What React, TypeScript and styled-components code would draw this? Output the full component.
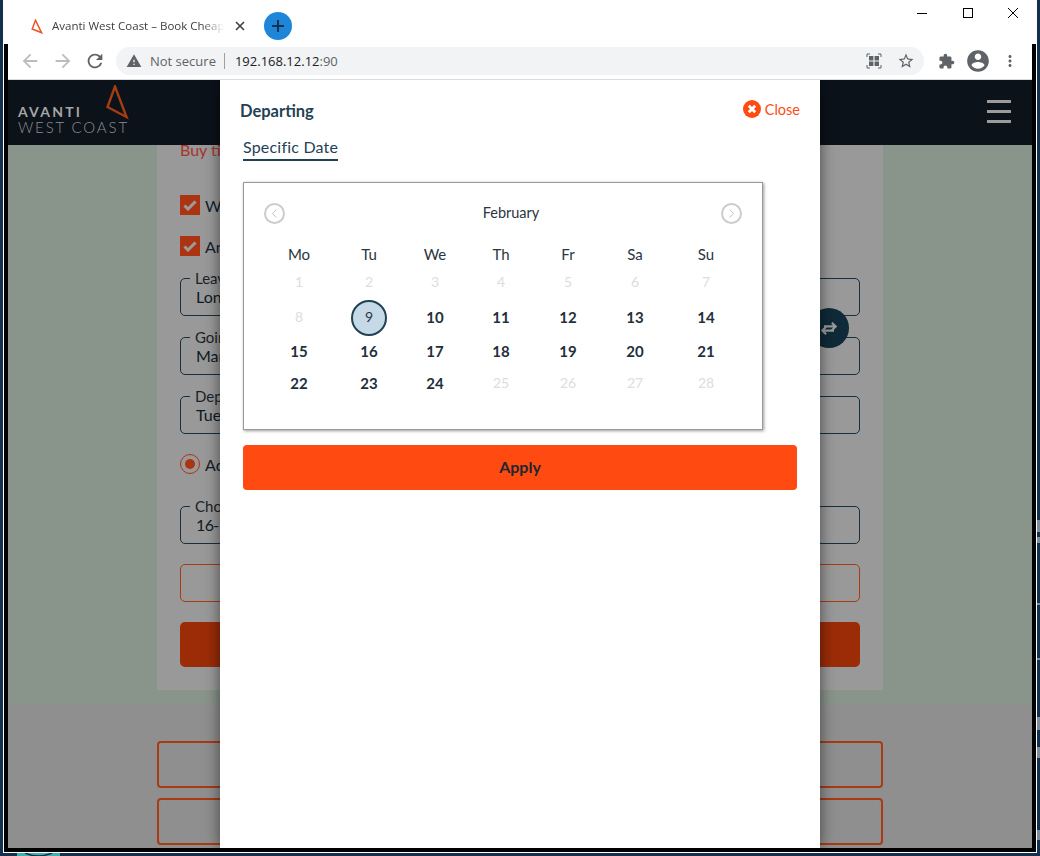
import React from 'react';
import styled, { createGlobalStyle } from 'styled-components';

const GlobalStyle = createGlobalStyle`
    html, body {
        margin: 0;
        padding: 0;
        background: #14304f;
    }
    * {
        box-sizing: border-box;
    }
`;

const weekdays = ['Mo', 'Tu', 'We', 'Th', 'Fr', 'Sa', 'Su'];
const days = Array.from({ length: 28 }, (_, i) => i + 1);

/* bits of desktop icon labels showing past the window edge */
const desktopMarks = [
    { top: 520, height: 12 },
    { top: 537, height: 6 },
    { top: 603, height: 2 },
    { top: 658, height: 2 },
    { top: 717, height: 13 },
    { top: 747, height: 11 },
    { top: 830, height: 10 },
];

const isOff = (day: number) => day < 9 || day > 24;

const Icon: React.FC<{ d: string; size?: number; color: string }> = ({ d, size = 24, color }) => (
    <svg width={size} height={size} viewBox="0 0 24 24" fill={color}>
        <path d={d} />
    </svg>
);

const ICONS = {
    back: 'M20 11H7.83l5.59-5.59L12 4l-8 8 8 8 1.41-1.41L7.83 13H20v-2z',
    forward: 'M12 4l-1.41 1.41L16.17 11H4v2h12.17l-5.58 5.59L12 20l8-8z',
    reload: 'M17.65 6.35C16.2 4.9 14.21 4 12 4c-4.42 0-7.99 3.58-7.99 8s3.57 8 7.99 8c3.73 0 6.84-2.55 7.73-6h-2.08c-.82 2.33-3.04 4-5.65 4-3.31 0-6-2.69-6-6s2.69-6 6-6c1.66 0 3.14.69 4.22 1.78L13 11h7V4l-2.35 2.35z',
    warning: 'M1 21h22L12 2 1 21zm12-3h-2v-2h2v2zm0-4h-2v-4h2v4z',
    star: 'M22 9.24l-7.19-.62L12 2 9.19 8.63 2 9.24l5.46 4.73L5.82 21 12 17.27 18.18 21l-1.63-7.03L22 9.24zM12 15.4l-3.76 2.27 1-4.28-3.32-2.88 4.38-.38L12 6.1l1.71 4.04 4.38.38-3.32 2.88 1 4.28L12 15.4z',
    puzzle: 'M20.5 11H19V7c0-1.1-.9-2-2-2h-4V3.5C13 2.12 11.88 1 10.5 1S8 2.12 8 3.5V5H4c-1.1 0-1.99.9-1.99 2v3.8H3.5c1.49 0 2.7 1.21 2.7 2.7s-1.21 2.7-2.7 2.7H2V20c0 1.1.9 2 2 2h3.8v-1.5c0-1.49 1.21-2.7 2.7-2.7 1.49 0 2.7 1.21 2.7 2.7V22H17c1.1 0 2-.9 2-2v-4h1.5c1.38 0 2.5-1.12 2.5-2.5S21.88 11 20.5 11z',
    account: 'M12 2C6.48 2 2 6.48 2 12s4.48 10 10 10 10-4.48 10-10S17.52 2 12 2zm0 3c1.66 0 3 1.34 3 3s-1.34 3-3 3-3-1.34-3-3 1.34-3 3-3zm0 14.2c-2.5 0-4.71-1.28-6-3.22.03-1.99 4-3.08 6-3.08 1.99 0 5.97 1.09 6 3.08-1.29 1.94-3.5 3.22-6 3.22z',
    dots: 'M12 8c1.1 0 2-.9 2-2s-.9-2-2-2-2 .9-2 2 .9 2 2 2zm0 2c-1.1 0-2 .9-2 2s.9 2 2 2 2-.9 2-2-.9-2-2-2zm0 6c-1.1 0-2 .9-2 2s.9 2 2 2 2-.9 2-2-.9-2-2-2z',
};

const CheckMark: React.FC = () => (
    <svg width="14" height="12" viewBox="0 0 14 12">
        <path d="M1.5 6.5 L5 10 L12.5 2.5" fill="none" stroke="#9c9c9c" strokeWidth="3" />
    </svg>
);

const MonthArrow: React.FC<{ dir: 'left' | 'right' }> = ({ dir }) => (
    <svg width="21" height="21" viewBox="0 0 21 21" fill="none">
        <circle cx="10.5" cy="10.5" r="9.5" stroke="#cccccc" strokeWidth="2" />
        <path d={dir === 'left' ? 'M12.3 6.5 L8.5 10.5 L12.3 14.5' : 'M8.7 6.5 L12.5 10.5 L8.7 14.5'} stroke="#c4c4c4" strokeWidth="1" />
    </svg>
);

export default function App(): React.ReactElement {
    return (
        <Desktop>
            <GlobalStyle />
            <DesktopIcon width="43" height="3" viewBox="0 0 43 3">
                <rect width="43" height="3" fill="#3fb0b4" />
                <path d="M8 0 Q21 6 35 0" fill="none" stroke="#14304f" strokeWidth="1.5" />
            </DesktopIcon>
            {desktopMarks.map((mark) => (
                <DesktopMark key={mark.top} $top={mark.top} $height={mark.height} />
            ))}
            <Window>
                <TitleBar>
                    <Tab>
                        <svg width="12" height="15" viewBox="0 0 12 15" fill="none">
                            <path d="M4.5 1.2 L1.2 10 L10.6 13.8 Z" stroke="#f0522a" strokeWidth="1.5" />
                        </svg>
                        <TabTitle>Avanti West Coast – Book Cheap Train Tickets</TabTitle>
                        <svg width="10" height="10" viewBox="0 0 10 10">
                            <path d="M1 1 L9 9 M9 1 L1 9" stroke="#3c4043" strokeWidth="1.6" />
                        </svg>
                    </Tab>
                    <NewTab>
                        <svg width="14" height="14" viewBox="0 0 14 14">
                            <path d="M7 1 V13 M1 7 H13" stroke="#14304f" strokeWidth="2" />
                        </svg>
                    </NewTab>
                    <WindowControls>
                        <svg width="12" height="12" viewBox="0 0 12 12">
                            <path d="M1 6.5 H11" stroke="#000" strokeWidth="1" />
                        </svg>
                        <svg width="12" height="12" viewBox="0 0 12 12" fill="none">
                            <rect x="1.5" y="1.5" width="9" height="9" stroke="#000" strokeWidth="1" />
                        </svg>
                        <svg width="12" height="12" viewBox="0 0 12 12">
                            <path d="M1 1 L11 11 M11 1 L1 11" stroke="#000" strokeWidth="1" />
                        </svg>
                    </WindowControls>
                </TitleBar>
                <Frame>
                    <Toolbar>
                        <NavIcons>
                            <Icon d={ICONS.back} size={22} color="#babcbe" />
                            <Icon d={ICONS.forward} size={22} color="#babcbe" />
                            <Icon d={ICONS.reload} size={22} color="#5f6368" />
                        </NavIcons>
                        <Omnibox>
                            <Icon d={ICONS.warning} size={16} color="#5f6368" />
                            <NotSecure>Not secure</NotSecure>
                            <Divider />
                            <Url>
                                192.168.12.12<UrlPort>:90</UrlPort>
                            </Url>
                            <OmniIcons>
                                <svg width="16" height="16" viewBox="0 0 16 16" fill="none">
                                    <path d="M1 4 V1 H4 M12 1 H15 V4 M15 12 V15 H12 M4 15 H1 V12" stroke="#5f6368" strokeWidth="1" />
                                    <path d="M3 3 H7.4 V7.4 H3 Z M8.6 3 H13 V7.4 H8.6 Z M3 8.6 H7.4 V13 H3 Z M8.6 8.6 H13 V13 H8.6 Z" fill="#5f6368" />
                                </svg>
                                <Icon d={ICONS.star} size={18} color="#5f6368" />
                            </OmniIcons>
                        </Omnibox>
                        <ToolIcons>
                            <Icon d={ICONS.puzzle} size={17} color="#5f6368" />
                            <Icon d={ICONS.account} size={26} color="#5f6368" />
                            <Icon d={ICONS.dots} size={18} color="#5f6368" />
                        </ToolIcons>
                    </Toolbar>
                    <Page>
                        <Header>
                            <Logo>
                                <LogoWords>
                                    <LogoTop>AVANTI</LogoTop>
                                    <LogoBottom>WEST COAST</LogoBottom>
                                </LogoWords>
                                <LogoMark width="24" height="36" viewBox="0 0 24 36" fill="none">
                                    <path d="M10 1.5 L2.5 22 L21.5 32 Z" stroke="#a53c14" strokeWidth="2.4" />
                                </LogoMark>
                            </Logo>
                            <Burger>
                                <BurgerLine />
                                <BurgerLine />
                                <BurgerLine />
                            </Burger>
                        </Header>
                        <Main>
                            <Card>
                                <BuyText>Buy tickets</BuyText>
                                <CheckRow>
                                    <CheckBox><CheckMark /></CheckBox>
                                    Web
                                </CheckRow>
                                <CheckRow>
                                    <CheckBox><CheckMark /></CheckBox>
                                    Any
                                </CheckRow>
                                <FieldStack>
                                    <Field>
                                        <Legend>Leaving</Legend>
                                        <FieldValue>London</FieldValue>
                                    </Field>
                                    <SwapButton>
                                        <svg width="20" height="15" viewBox="0 0 24 18" fill="none">
                                            <path d="M6 6.5 H20 M15.5 2 L20 6.5 L15.5 11 M18 11.5 H4 M8.5 7 L4 11.5 L8.5 16" stroke="#9a9a9a" strokeWidth="2.6" />
                                        </svg>
                                    </SwapButton>
                                    <Field>
                                        <Legend>Going</Legend>
                                        <FieldValue>Manchester</FieldValue>
                                    </Field>
                                    <Field>
                                        <Legend>Depart</Legend>
                                        <FieldValue>Tue</FieldValue>
                                    </Field>
                                </FieldStack>
                                <RadioRow>
                                    <Radio><RadioDot /></Radio>
                                    Adult
                                </RadioRow>
                                <Field>
                                    <Legend>Choose</Legend>
                                    <FieldValue $tight>16-17</FieldValue>
                                </Field>
                                <OutlineButton />
                                <SolidButton />
                            </Card>
                        </Main>
                        <Footer>
                            <FooterButton />
                            <FooterButton />
                        </Footer>
                        <Modal>
                            <ModalHeader>
                                <ModalTitle>Departing</ModalTitle>
                                <CloseLink>
                                    <svg width="18" height="18" viewBox="0 0 18 18">
                                        <circle cx="9" cy="9" r="9" fill="#ff4b12" />
                                        <path d="M5.8 5.8 L12.2 12.2 M12.2 5.8 L5.8 12.2" stroke="#fff" strokeWidth="2.8" />
                                    </svg>
                                    Close
                                </CloseLink>
                            </ModalHeader>
                            <ModalBody>
                                <TabLabel>Specific Date</TabLabel>
                                <Calendar>
                                    <MonthRow>
                                        <MonthArrow dir="left" />
                                        <MonthName>February</MonthName>
                                        <MonthArrow dir="right" />
                                    </MonthRow>
                                    <DayGrid>
                                        {weekdays.map((name) => (
                                            <Weekday key={name}>{name}</Weekday>
                                        ))}
                                        {days.map((day) =>
                                            day === 9 ? (
                                                <DayCell key={day}>
                                                    <SelectedDay>{day}</SelectedDay>
                                                </DayCell>
                                            ) : (
                                                <DayCell key={day} $off={isOff(day)}>
                                                    {day}
                                                </DayCell>
                                            )
                                        )}
                                    </DayGrid>
                                </Calendar>
                                <ApplyButton>Apply</ApplyButton>
                            </ModalBody>
                        </Modal>
                    </Page>
                </Frame>
            </Window>
        </Desktop>
    );
}

const Desktop = styled.div`
    position: relative;
    width: 1040px;
    height: 856px;
    padding: 0 3px 3px;
    overflow: hidden;
    background: #14304f;
`;

const DesktopIcon = styled.svg`
    position: absolute;
    left: 17px;
    bottom: 0;
`;

const DesktopMark = styled.div<{ $top: number; $height: number }>`
    position: absolute;
    right: 0;
    top: ${({ $top }) => $top}px;
    width: 3px;
    height: ${({ $height }) => $height}px;
    background: #7f8c99;
`;

const Window = styled.div`
    position: relative;
    height: 853px;
    padding: 0 1px 1px;
    background: #fff;
`;

const TitleBar = styled.div`
    height: 44px;
    display: flex;
    align-items: center;
    padding-top: 8px;
    padding-left: 27px;
    font-family: "Open Sans", "Liberation Sans", sans-serif;
`;

const Tab = styled.div`
    width: 214px;
    display: flex;
    align-items: center;
`;

const TabTitle = styled.div`
    width: 172px;
    margin-left: 9px;
    margin-right: 11px;
    padding-bottom: 2px;
    overflow: hidden;
    white-space: nowrap;
    font-size: 11.5px;
    color: #3c4043;
    -webkit-mask-image: linear-gradient(to right, #000 150px, transparent 172px);
    mask-image: linear-gradient(to right, #000 150px, transparent 172px);
`;

const NewTab = styled.div`
    width: 28px;
    height: 28px;
    margin-left: 19px;
    border-radius: 50%;
    background: #1e86d9;
    display: flex;
    align-items: center;
    justify-content: center;
`;

const WindowControls = styled.div`
    margin-left: auto;
    align-self: flex-start;
    margin-top: -1px;
    padding-right: 17px;
    display: flex;
    gap: 33.5px;
`;

const Frame = styled.div`
    height: 808px;
    padding: 0 4px 4px;
    background: #000;
`;

const Toolbar = styled.div`
    height: 36px;
    display: flex;
    align-items: center;
    padding: 0 0 1px 11px;
    background: #fff;
    border-bottom: 1px solid #dadce0;
`;

const NavIcons = styled.div`
    width: 97px;
    display: flex;
    gap: 11px;
    align-items: center;

    svg:last-child {
        margin-left: -1px;
    }
`;

const Omnibox = styled.div`
    width: 808px;
    height: 28px;
    border-radius: 14px;
    background: #f1f3f4;
    display: flex;
    align-items: center;
    padding: 0 9px 0 10px;
    font-family: "Open Sans", "Liberation Sans", sans-serif;
    font-size: 13px;
`;

const NotSecure = styled.span`
    margin-left: 8px;
    color: #5f6368;
`;

const Divider = styled.span`
    width: 1px;
    height: 16px;
    margin: 0 10px 0 8px;
    background: #9aa0a6;
`;

const Url = styled.span`
    color: #202124;
`;

const UrlPort = styled.span`
    color: #5f6368;
`;

const OmniIcons = styled.div`
    margin-left: auto;
    display: flex;
    align-items: center;
    gap: 15px;
`;

const ToolIcons = styled.div`
    display: flex;
    align-items: center;
    gap: 10px;
    margin-left: 14px;
`;

const Page = styled.div`
    position: relative;
    height: 768px;
    overflow: hidden;
    display: flex;
    flex-direction: column;
    font-family: Lato, "Liberation Sans", sans-serif;
    background: #8f8f8f;
`;

const Header = styled.div`
    height: 65px;
    flex: none;
    display: flex;
    justify-content: space-between;
    align-items: center;
    padding: 0 21px 0 10px;
    background: #0b1219;
`;

const Logo = styled.div`
    position: relative;
    width: 112px;
    height: 65px;
`;

const LogoWords = styled.div`
    padding-top: 24px;
`;

const LogoTop = styled.div`
    font-size: 14px;
    line-height: 16px;
    font-weight: 700;
    letter-spacing: 2.2px;
    color: #a5a5a5;
`;

const LogoBottom = styled.div`
    font-size: 15px;
    line-height: 15px;
    font-weight: 300;
    letter-spacing: 1.85px;
    white-space: nowrap;
    color: #8e8e8e;
`;

const LogoMark = styled.svg`
    position: absolute;
    left: 87px;
    top: 5px;
`;

const Burger = styled.div`
    display: flex;
    flex-direction: column;
    gap: 7px;
    margin-top: -2px;
`;

const BurgerLine = styled.div`
    width: 24px;
    height: 3px;
    background: #9c9c9c;
`;

const Main = styled.div`
    height: 560px;
    flex: none;
    padding: 0 149px 15px;
    background: #89948a;
`;

const Card = styled.div`
    height: 545px;
    padding: 0 23px;
    background: #999;
    color: #14202b;
    font-size: 16px;
`;

const BuyText = styled.div`
    height: 50px;
    line-height: 10px;
    font-size: 16px;
    color: #a8342a;
`;

const CheckRow = styled.div`
    height: 20px;
    display: flex;
    align-items: center;
    gap: 5px;

    & + & {
        margin-top: 21px;
    }
`;

const CheckBox = styled.span`
    width: 20px;
    height: 20px;
    flex: none;
    display: flex;
    align-items: center;
    justify-content: center;
    background: #ab3512;
`;

const FieldStack = styled.div`
    position: relative;
    margin-top: 15px;
    display: flex;
    flex-direction: column;
    gap: 14px;
`;

const Field = styled.fieldset`
    height: 45px;
    margin: 0;
    padding: 0 0 0 15px;
    border: 1px solid #17303f;
    border-radius: 5px;
    min-width: 0;
`;

const Legend = styled.legend`
    padding: 0 5px;
    margin-left: -6px;
    line-height: 14px;
    font-size: 15px;
    color: #1a2229;
`;

const FieldValue = styled.div<{ $tight?: boolean }>`
    line-height: 24px;
    font-size: 16px;
    letter-spacing: ${({ $tight }) => ($tight ? '-0.6px' : '0')};
    color: #0e1a24;
`;

const SwapButton = styled.div`
    position: absolute;
    right: 11px;
    top: 37px;
    width: 40px;
    height: 40px;
    border-radius: 50%;
    display: flex;
    align-items: center;
    justify-content: center;
    background: #0f2a38;
`;

const RadioRow = styled.div`
    height: 20px;
    margin-top: 20px;
    margin-bottom: 25px;
    display: flex;
    align-items: center;
    gap: 5px;
`;

const Radio = styled.span`
    width: 20px;
    height: 20px;
    flex: none;
    border: 1px solid #ab3512;
    border-radius: 50%;
    display: flex;
    align-items: center;
    justify-content: center;
`;

const RadioDot = styled.span`
    width: 10px;
    height: 10px;
    border-radius: 50%;
    background: #ab3512;
`;

const OutlineButton = styled.div`
    height: 38px;
    margin-top: 20px;
    border: 1px solid #a83a14;
    border-radius: 5px;
`;

const SolidButton = styled.div`
    height: 45px;
    margin-top: 20px;
    border-radius: 5px;
    background: #9c2c08;
`;

const Footer = styled.div`
    flex: 1;
    padding: 36px 149px 0;
    display: flex;
    flex-direction: column;
    gap: 10px;
`;

const FooterButton = styled.div`
    height: 47px;
    border: 2px solid #a83a14;
    border-radius: 4px;
`;

const Modal = styled.div`
    position: absolute;
    left: 212px;
    top: 0;
    width: 600px;
    height: 768px;
    background: #fff;
    box-shadow: 0 0 14px rgba(0, 0, 0, 0.55);
`;

const ModalHeader = styled.div`
    height: 54px;
    padding: 4px 20px 0;
    display: flex;
    align-items: center;
    justify-content: space-between;
`;

const ModalTitle = styled.div`
    padding-top: 3px;
    font-size: 16.5px;
    font-weight: 700;
    color: #1f4254;
`;

const CloseLink = styled.div`
    display: flex;
    align-items: center;
    gap: 4px;
    font-size: 14.5px;
    color: #ff4b12;
`;

const ModalBody = styled.div`
    padding: 0 23px;
`;

const TabLabel = styled.div`
    display: inline-block;
    height: 27px;
    line-height: 25px;
    font-size: 16px;
    letter-spacing: 0.2px;
    color: #1f4254;
    border-bottom: 2px solid #1f4254;
`;

const Calendar = styled.div`
    width: 520px;
    height: 248px;
    margin-top: 21px;
    padding: 15px 20px 0;
    border: 1px solid #999;
    box-shadow: 1px 1px 3px rgba(0, 0, 0, 0.4);
`;

const MonthRow = styled.div`
    height: 30px;
    margin-bottom: 16px;
    display: flex;
    align-items: center;
    justify-content: space-between;
`;

const MonthName = styled.div`
    margin-left: 16px;
    padding-bottom: 2px;
    font-size: 14.5px;
    color: #2a3540;
`;

const DayGrid = styled.div`
    display: grid;
    grid-template-columns: 70px 70px 62px 70px 64px 70px 72px;
    grid-template-rows: 22px 34px 36px 32px 32px;
`;

const Weekday = styled.div`
    display: flex;
    align-items: center;
    justify-content: center;
    padding-bottom: 2px;
    font-size: 15px;
    color: #2a3540;
`;

const DayCell = styled.div<{ $off?: boolean }>`
    display: flex;
    align-items: center;
    justify-content: center;
    font-size: ${({ $off }) => ($off ? '14px' : '15px')};
    font-weight: ${({ $off }) => ($off ? 400 : 700)};
    color: ${({ $off }) => ($off ? '#dddddd' : '#232f3b')};
    line-height: 16px;
    padding-bottom: ${({ $off }) => ($off ? '2px' : '3px')};
`;

const SelectedDay = styled.div`
    width: 36px;
    height: 36px;
    margin-bottom: -3px;
    padding-bottom: 2px;
    border-radius: 50%;
    border: 2px solid #1f4254;
    background: #c5d9e6;
    display: flex;
    align-items: center;
    justify-content: center;
    font-size: 14px;
    font-weight: 400;
    color: #2a3540;
`;

const ApplyButton = styled.div`
    width: 554px;
    height: 45px;
    margin-top: 15px;
    padding-bottom: 2px;
    border-radius: 4px;
    background: #ff4b12;
    display: flex;
    align-items: center;
    justify-content: center;
    font-size: 16px;
    font-weight: 700;
    color: #1d2730;
`;
